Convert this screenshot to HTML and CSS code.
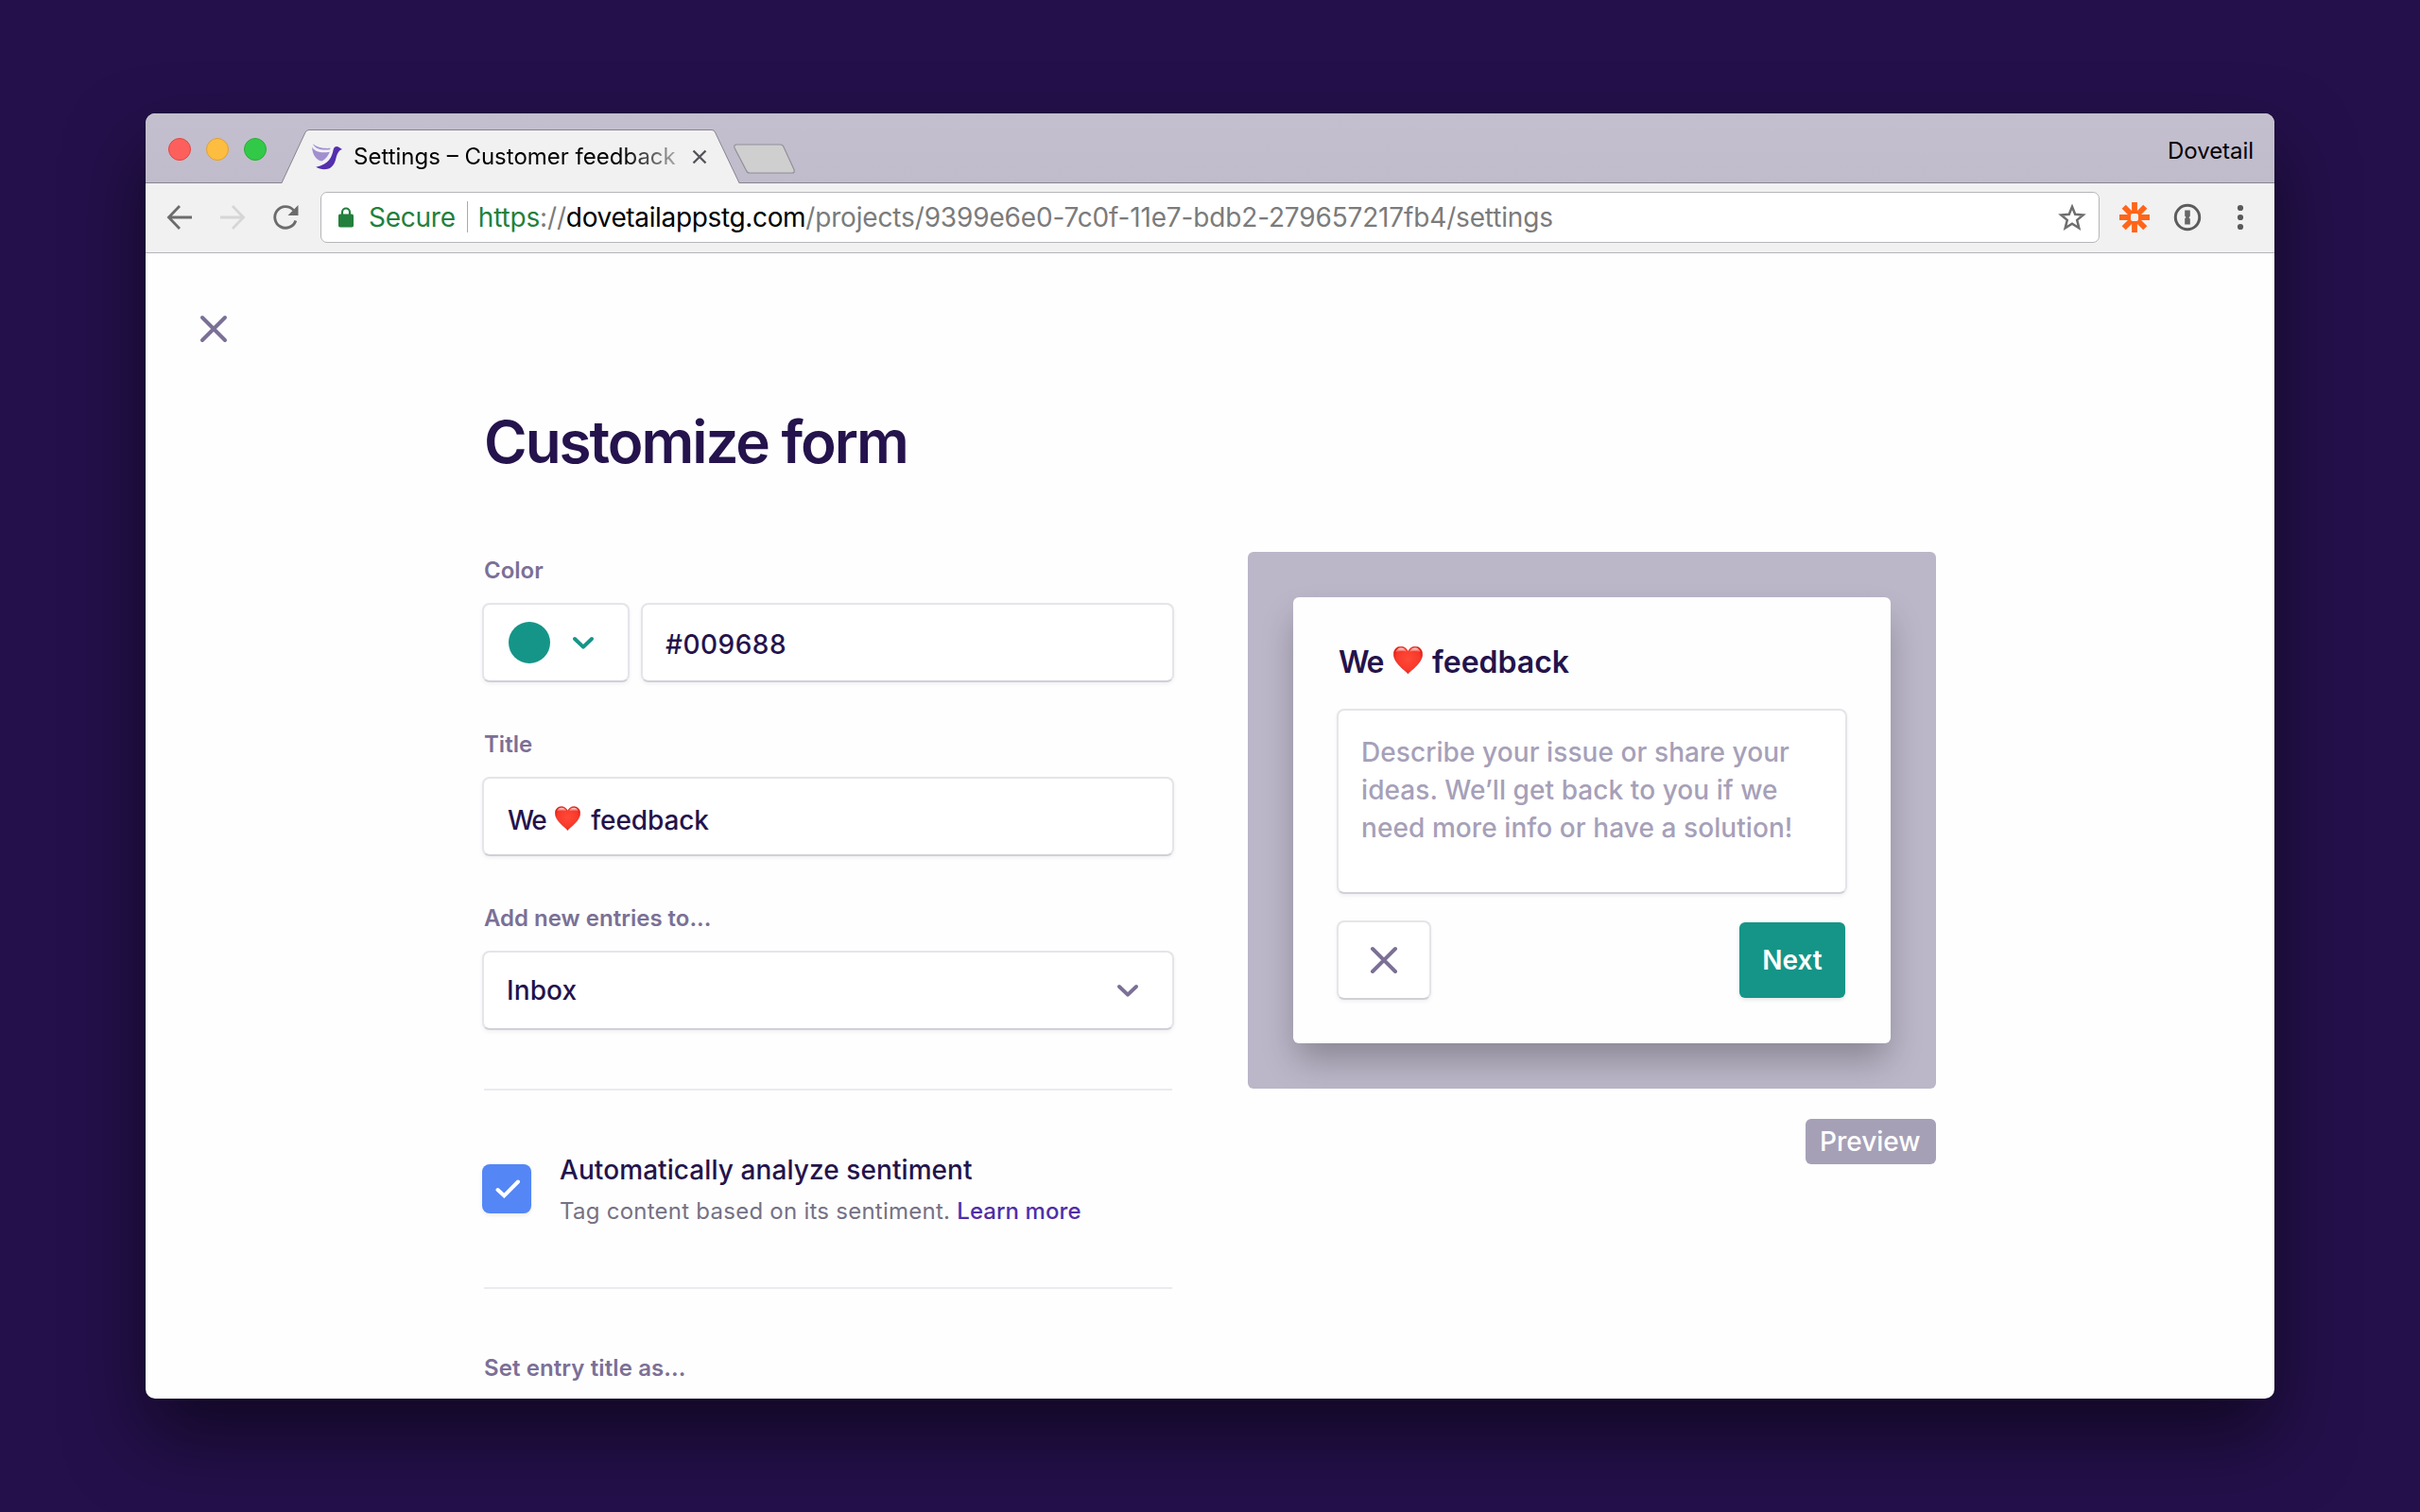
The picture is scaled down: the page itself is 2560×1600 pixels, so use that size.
FILE: index.html
```html
<!DOCTYPE html>
<html lang="en">
<head>
<meta charset="utf-8">
<title>Settings – Customer feedback</title>
<link rel="stylesheet" href="styles.css">
</head>
<body>
<svg class="defs" width="0" height="0" aria-hidden="true">
  <defs>
    <radialGradient id="heartFill" cx=".5" cy=".45" r=".6">
      <stop offset="0" stop-color="#ff4a38"/><stop offset=".7" stop-color="#f8382a"/><stop offset="1" stop-color="#d31108"/>
    </radialGradient>
    <linearGradient id="heartGloss" x1="0" y1="0" x2="0" y2="1">
      <stop offset="0" stop-color="#fff" stop-opacity=".85"/><stop offset="1" stop-color="#fff" stop-opacity="0"/>
    </linearGradient>
    <symbol id="heart" viewBox="0 0 31 29">
      <path d="M15.5 29C13.6 26 .3 18 .3 8.300C.3 3.600 3.500.2 7.900.2c3.300 0 6.100 1.900 7.600 5.200C17 2.100 19.800.2 23.100.2c4.400 0 7.600 3.400 7.600 8.100C30.700 18 17.400 26 15.500 29z" fill="url(#heartFill)" stroke="#cf1a0e" stroke-width=".5"/>
      <path d="M2 6.500C3 3 5.300 1.500 7.900 1.500c2.700 0 4.900 1.500 6.100 4.300C11 4.500 5.500 4.500 2 6.500zM17 5.800c1.200-2.800 3.400-4.300 6.100-4.300 2.600 0 4.900 1.500 5.900 5C25.500 4.500 20 4.500 17 5.800z" fill="url(#heartGloss)"/>
    </symbol>
  </defs>
</svg>
<div class="window">
  <header class="titlebar">
    <div class="lights"><i class="light red"></i><i class="light yellow"></i><i class="light green"></i></div>
    <div class="tab">
      <svg class="tab-shape" width="484" height="57" viewBox="0 0 484 57"><path d="M0 57L25 3Q26.500.5 29 .5H455Q457.500.5 458.500 3L484 57z" fill="#f1f1f1"/><path d="M0 56.500L25 3Q26.500.5 29 .5H455Q457.500.5 458.500 3L484 56.500" fill="none" stroke="#88848f"/></svg>
      <svg class="favicon" width="32" height="28" viewBox="0 0 32 28">
        <path d="M1 0C5 4 12 5.400 19.500 4.800L19 6.200C11 7.300 3 6 1 0z" fill="#a18fd0"/>
        <path d="M0 3.500C3 8.800 10 10.300 18.800 8.700C17 13 14.500 16.500 10.500 18.500C4.500 17.500 .5 12 0 3.500z" fill="#a18fd0"/>
        <path d="M32 6L28.800 4C26.500 2.300 23.300 3 22.600 6.500C21 14.500 18 21.500 4.200 24.800C9 27.500 15.500 28.200 20 25.200C25.500 21.500 25 14 27.300 10.300C28.400 8.500 29 7 32 6z" fill="#542fae"/>
      </svg>
      <span class="tab-title">Settings – Customer feedback</span>
      <svg class="tab-close" width="16" height="16" viewBox="0 0 16 16"><path d="M1.500 1.500l13 13M14.500 1.500l-13 13" stroke="#55545a" stroke-width="2.400"/></svg>
    </div>
    <svg class="newtab" width="67" height="34" viewBox="0 0 67 34"><path d="M4.500 2h46Q53 2 54 4.500L65 28.500Q66 32 63 32H18Q15.500 32 14.500 29.500L2 5.500Q1 2 4.500 2z" fill="#bab6be"/><path d="M4.500 1h46Q53 1 54 3.500L65 27.500Q66 31 63 31H18Q15.500 31 14.500 28.500L2 4.500Q1 1 4.500 1z" fill="#cfcfcf" stroke="#929098" stroke-width="1.200"/></svg>
    <span class="profile">Dovetail</span>
  </header>
  <nav class="toolbar">
    <svg class="nav-icon" width="28" height="28" viewBox="0 0 28 28"><path d="M27 14H3M14 2L2.500 14L14 26" fill="none" stroke="#6c6c6c" stroke-width="2.800"/></svg>
    <svg class="nav-icon" width="28" height="28" viewBox="0 0 28 28"><path d="M1 14h24M14 2l11.500 12L14 26" fill="none" stroke="#d6d6d6" stroke-width="2.800"/></svg>
    <svg class="nav-icon" width="28" height="28" viewBox="0 0 28 28"><path d="M24.800 17.500A11.300 11.300 0 1 1 22.500 6.400" fill="none" stroke="#6c6c6c" stroke-width="2.900"/><path d="M27.500 1v11H16.500z" fill="#6c6c6c"/></svg>
    <div class="omnibox">
      <svg class="lock" width="16" height="22" viewBox="0 0 16 22"><path d="M4 9V5.500a4 4 0 0 1 8 0V9" fill="none" stroke="#22803c" stroke-width="2.200"/><rect y="7.500" width="16" height="14" rx="1.800" fill="#22803c"/></svg>
      <span class="secure">Secure</span>
      <span class="url"><b>https</b>://<em>dovetailappstg.com</em>/projects/9399e6e0-7c0f-11e7-bdb2-279657217fb4/settings</span>
      <svg class="star" width="30" height="30" viewBox="0 0 30 30"><path d="M15 3.800l3.200 7.900 8.500.7-6.500 5.500 2.100 8.300L15 21.700l-7.300 4.500 2.100-8.300-6.500-5.500 8.500-.7z" fill="none" stroke="#6e6e6e" stroke-width="2.500"/></svg>
    </div>
    <svg class="ext" width="32" height="32" viewBox="0 0 32 32"><path d="M16 0v32M0 16h32M4.700 4.700l22.600 22.600M27.300 4.700L4.700 27.300" stroke="#ff6519" stroke-width="5.800"/><rect x="12" y="12" width="8" height="8" rx="2" fill="#f1f1f1"/></svg>
    <svg class="ext onep" width="30" height="30" viewBox="0 0 30 30"><circle cx="15" cy="15" r="12.700" fill="none" stroke="#5c5c5c" stroke-width="3"/><path d="M12.200 7.500h5.600v6.300l-1.300 1.400 1.300 1.400v5.900h-5.600v-6.200l1.300-1.300-1.300-1.400z" fill="#666"/></svg>
    <svg class="ext dots" width="8" height="28" viewBox="0 0 8 28"><g fill="#5a5a5a"><circle cx="4" cy="4" r="3.100"/><circle cx="4" cy="14" r="3.100"/><circle cx="4" cy="24" r="3.100"/></g></svg>
  </nav>
  <main class="page">
    <svg class="close" width="32" height="32" viewBox="0 0 32 32"><path d="M4 4l24 24M28 4L4 28" stroke="#7b7096" stroke-width="4" stroke-linecap="round"/></svg>
    <div class="content">
      <h1>Customize form</h1>
      <div class="columns">
        <section class="form">
          <label class="label">Color</label>
          <div class="color-row">
            <div class="box swatch"><i class="dot"></i><svg width="24" height="16" viewBox="0 0 24 16"><path d="M3 4l9 8.600 9-8.600" fill="none" stroke="#159588" stroke-width="4" stroke-linecap="round" stroke-linejoin="round"/></svg></div>
            <div class="box hex">#009688</div>
          </div>
          <label class="label">Title</label>
          <div class="box title-field"><span><span class="we">We</span> <svg class="heart-sm" width="27" height="26"><use href="#heart"/></svg> feedback</span></div>
          <label class="label">Add new entries to...</label>
          <div class="box select">Inbox<svg width="24" height="16" viewBox="0 0 24 16"><path d="M3 4l9 8.600 9-8.600" fill="none" stroke="#7b7096" stroke-width="4" stroke-linecap="round" stroke-linejoin="round"/></svg></div>
          <hr>
          <div class="option">
            <span class="check"><svg width="26" height="20" viewBox="0 0 26 20"><path d="M2.500 11l6.800 6.300L24 2.500" fill="none" stroke="#fff" stroke-width="4" stroke-linecap="round"/></svg></span>
            <div><div class="option-title">Automatically analyze sentiment</div><div class="option-text">Tag content based on its sentiment. <a>Learn more</a></div></div>
          </div>
          <hr class="second">
          <label class="label last">Set entry title as...</label>
        </section>
        <aside class="side">
          <div class="preview">
            <div class="card">
              <h2><span class="we">We</span> <svg class="heart-lg" width="31" height="29"><use href="#heart"/></svg> feedback</h2>
              <div class="box textarea">Describe your issue or share your<br>ideas. We’ll get back to you if we<br>need more info or have a solution!</div>
              <div class="actions">
                <div class="box cancel"><svg width="32" height="32" viewBox="0 0 32 32"><path d="M4 4l24 24M28 4L4 28" stroke="#7b7096" stroke-width="4" stroke-linecap="round"/></svg></div>
                <div class="next">Next</div>
              </div>
            </div>
          </div>
          <span class="badge">Preview</span>
        </aside>
      </div>
    </div>
  </main>
</div>
</body>
</html>
```
FILE: styles.css
```css
* { box-sizing: border-box; }
body {
  margin: 0;
  width: 2560px;
  height: 1600px;
  padding: 120px 154px;
  background: #24104b;
  font-family: Inter, "Liberation Sans", sans-serif;
  color: #24134c;
  overflow: hidden;
}
svg { display: block; flex: none; }
.defs { position: absolute; }
.window {
  width: 2252px;
  height: 1360px;
  display: flex;
  flex-direction: column;
  border-radius: 10px;
  overflow: hidden;
  background: #fefefe;
  box-shadow: 0 0 2px rgba(0, 0, 0, .5), 0 40px 80px rgba(0, 0, 0, .52);
}

/* Title bar */
.titlebar {
  flex: none;
  height: 74px;
  display: flex;
  align-items: flex-end;
  padding: 0 22px 0 24px;
  background: linear-gradient(#c4bfce, #c1bccb);
  box-shadow: inset 0 -1px #88848f;
}
.lights { display: flex; gap: 16px; margin-bottom: 24px; }
.light { width: 24px; height: 24px; border-radius: 50%; border: 1px solid; }
.red { background: #fd605c; border-color: #e24640; }
.yellow { background: #fdbd40; border-color: #e0a033; }
.green { background: #33c948; border-color: #28ad35; }
.tab {
  position: relative;
  width: 484px;
  height: 57px;
  margin-left: 16px;
  padding: 0 34px 0 32px;
  display: flex;
  align-items: center;
}
.tab-shape { position: absolute; left: 0; top: 0; }
.favicon { position: relative; margin-top: 1px; }
.tab-title {
  position: relative;
  flex: none;
  width: 350px;
  margin-left: 12px;
  font-size: 24px;
  line-height: 30px;
  white-space: nowrap;
  color: transparent;
  background: linear-gradient(90deg, #000 285px, rgba(0, 0, 0, .25) 345px);
  -webkit-background-clip: text;
  background-clip: text;
}
.tab-close { position: relative; margin: 1px 0 0 8px; }
.newtab { margin: 0 0 8px -7px; }
.profile { margin: 0 0 19px auto; color: #000; font-size: 24px; line-height: 30px; letter-spacing: -.05px; }

/* Toolbar */
.toolbar {
  flex: none;
  height: 74px;
  padding: 0 32px 2px 22px;
  display: flex;
  align-items: center;
  background: #f1f1f1;
  border-bottom: 1px solid #b5b4b8;
}
.nav-icon { margin-right: 28px; }
.nav-icon + .nav-icon + .nav-icon { margin-right: 23px; }
.omnibox {
  width: 1882px;
  height: 54px;
  padding: 0 13px 0 18px;
  display: flex;
  align-items: center;
  background: #fff;
  border: 1px solid #b6b5b9;
  border-radius: 7px;
  font-size: 28px;
  letter-spacing: -.16px;
  white-space: nowrap;
}
.secure { margin-left: 16px; padding: 1px 12px 0 0; color: #22803c; line-height: 32px; letter-spacing: -.25px; border-right: 1px solid #aaa; }
.url { margin-left: 11px; padding-top: 1px; color: #7b7b7b; }
.url b { font-weight: 400; color: #22803c; }
.url em { font-style: normal; color: #000; letter-spacing: -.35px; }
.star { margin-left: auto; }
.ext { margin-left: 21px; }
.onep { margin-left: 25px; }
.dots { margin-left: 37px; }

/* Page */
.page { flex: 1; min-height: 0; padding-top: 64px; }
.close { margin-left: 56px; }
.content { width: 1536px; margin: 68px auto 0; }
h1 { margin: 0 0 81px; font-size: 62px; font-weight: 600; line-height: 71px; letter-spacing: -2.050px; }
.columns { display: grid; grid-template-columns: 728px 728px; gap: 80px; }
.form { padding-top: 4px; }
.label { display: block; height: 30px; margin: 50px 0 20px; padding-top: 1px; color: #7b7096; font-size: 24px; font-weight: 600; line-height: 30px; }
.label:first-child { margin-top: 0; }
.label.last { margin: 68px 0 0; letter-spacing: .1px; }
.box {
  height: 84px;
  margin: 0 -2px;
  padding: 0 24px;
  display: flex;
  align-items: center;
  background: #fff;
  border: 2px solid #e5e4ea;
  border-bottom-color: #d1cfd8;
  border-radius: 8px;
  box-shadow: 0 2px 4px rgba(0, 0, 0, .06);
  font-size: 28px;
  font-weight: 500;
}
.color-row { display: flex; gap: 12px; margin: 0 -2px; }
.color-row .box { margin: 0; }
.swatch { width: 156px; padding: 0 26px; gap: 23px; }
.dot { width: 44px; height: 44px; border-radius: 50%; background: #159588; }
.hex { flex: 1; padding-top: 3px; letter-spacing: .5px; }
.title-field { padding: 7px 24px 0 25px; letter-spacing: -.1px; }
.title-field .we { letter-spacing: -1.300px; }
.heart-sm { display: inline-block; margin: 0 4px 0 2px; vertical-align: -1px; }
.heart-lg { display: inline-block; margin: 0 2px 0 3px; vertical-align: -1px; }
.select { justify-content: space-between; padding: 0 35px 0 24px; letter-spacing: .1px; }
hr { height: 2px; margin: 62px 0; border: 0; background: #ebeaf0; }
hr.second { margin: 60px 0 0; }
.option { display: flex; }
.check {
  flex: none;
  width: 52px;
  height: 52px;
  margin: 16px 30px 0 -2px;
  display: flex;
  align-items: center;
  justify-content: center;
  padding-left: 1px;
  border-radius: 8px;
  background: #5486f6;
  box-shadow: 0 2px 4px rgba(0, 0, 0, .08);
}
.option-title { font-size: 28px; font-weight: 500; line-height: 44px; letter-spacing: .08px; }
.option-text { height: 42px; padding-top: 1px; color: #757185; font-size: 24px; line-height: 42px; letter-spacing: .25px; }
.option-text a { color: #512da8; font-weight: 500; letter-spacing: .06px; }

/* Preview */
.side { display: flex; flex-direction: column; align-items: flex-end; }
.preview { width: 728px; height: 568px; padding: 48px; border-radius: 6px; background: #bbb6c8; overflow: hidden; }
.card { height: 472px; padding: 44px 48px 0; border-radius: 6px; background: #fefefe; box-shadow: 0 20px 36px -4px rgba(0, 0, 0, .27); }
h2 { margin: 0 0 26px; padding: 1px 0 0; height: 48px; font-size: 32px; font-weight: 600; line-height: 48px; }
h2 .we { letter-spacing: -1.500px; }
.textarea { display: block; height: 196px; padding: 24px; color: #a6a0b8; line-height: 40px; letter-spacing: .08px; white-space: nowrap; }
.actions { display: flex; justify-content: space-between; align-items: center; margin-top: 28px; }
.cancel { width: 100px; margin: 0 0 0 -2px; padding: 0; justify-content: center; }
.next {
  width: 112px;
  height: 80px;
  border-radius: 6px;
  background: #159588;
  color: #fff;
  font-size: 28px;
  font-weight: 600;
  line-height: 81px;
  text-align: center;
  box-shadow: 0 2px 4px rgba(0, 0, 0, .1);
}
.badge { width: 138px; height: 48px; margin-top: 32px; padding-left: 15px; border-radius: 6px; background: #a6a0b7; color: #fff; font-size: 28px; font-weight: 500; line-height: 49px; }
```
